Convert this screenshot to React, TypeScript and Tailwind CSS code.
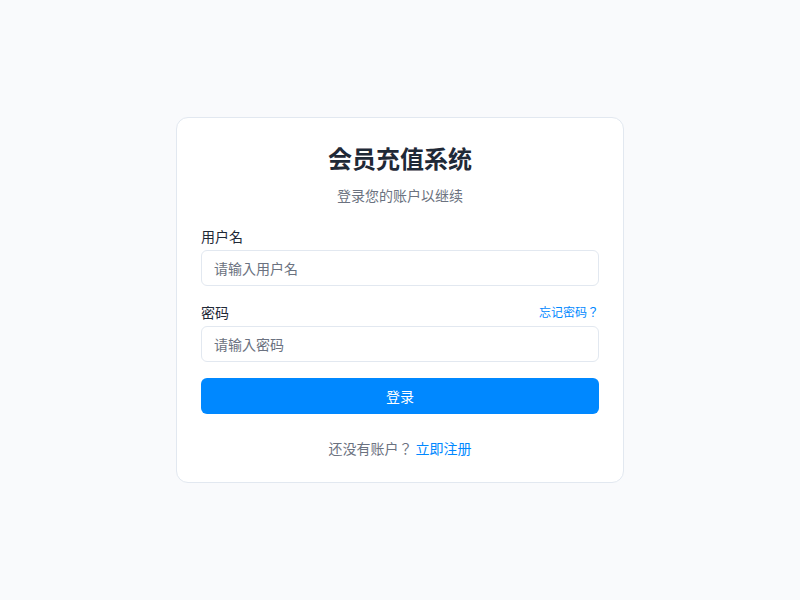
import React from 'react';

const font = { fontFamily: '"Noto Sans CJK JP", "Noto Sans", sans-serif' };

const App: React.FC = () => {
  return (
    <div className="min-h-screen w-full bg-[#f9fafc] flex items-center justify-center" style={font}>
      <div className="w-[448px] bg-white border border-[#e2e8f0] rounded-xl p-6">

        {/* HEADER */}
        <div className="text-center mb-[21px]">
          <h1 className="text-2xl leading-8 font-bold text-[#1f2937]">会员充值系统</h1>
          <p className="mt-[11px] text-sm leading-5 text-[#6b7280]">登录您的账户以继续</p>
        </div>

        {/* FORM */}
        <form className="space-y-4" onSubmit={(e) => e.preventDefault()}>
          <div>
            <label className="block mb-1 text-sm leading-5 text-[#1f2937]">用户名</label>
            <input
              type="text"
              placeholder="请输入用户名"
              className="w-full h-9 px-3 text-sm border border-[#e2e8f0] rounded-md bg-white text-[#1f2937] placeholder:text-[#6b7280] outline-none"
            />
          </div>

          <div>
            <div className="flex items-center justify-between mb-1">
              <label className="text-sm leading-5 text-[#1f2937]">密码</label>
              <a href="#" className="text-xs text-[#0088ff]">忘记密码？</a>
            </div>
            <input
              type="password"
              placeholder="请输入密码"
              className="w-full h-9 px-3 text-sm border border-[#e2e8f0] rounded-md bg-white text-[#1f2937] placeholder:text-[#6b7280] outline-none"
            />
          </div>

          <button
            type="submit"
            className="w-full h-9 rounded-md bg-[#0088ff] text-white text-sm"
          >
            登录
          </button>
        </form>

        {/* FOOTER */}
        <p className="mt-6 text-center text-sm leading-5 text-[#6b7280]">
          还没有账户？ <a href="#" className="text-[#0088ff]">立即注册</a>
        </p>

      </div>
    </div>
  );
};

export default App;
